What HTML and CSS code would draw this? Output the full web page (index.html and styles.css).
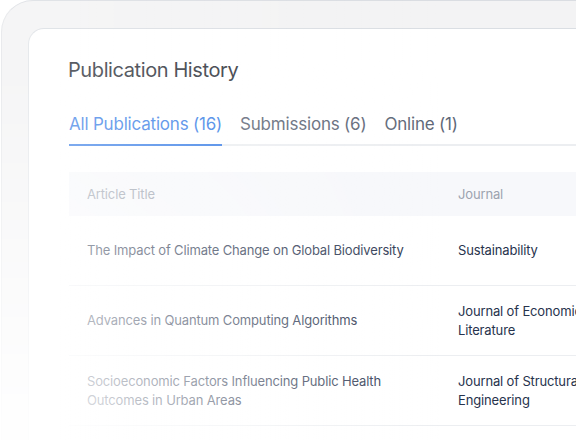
FILE: index.html
```html
<!DOCTYPE html>
<html>
<head>
    <title>Publication History</title>
    <link rel="stylesheet" href="styles.css">
</head>
<body>
    <div class="frame">
        <div class="card">
            <h1 class="card-title">Publication History</h1>

            <div class="tabs">
                <div class="tab active">All Publications (16)</div>
                <div class="tab">Submissions (6)</div>
                <div class="tab">Online (1)</div>
            </div>

            <div class="table">
                <div class="row head">
                    <div class="cell">Article Title</div>
                    <div class="cell">Journal</div>
                    <div class="cell">Status</div>
                </div>
                <div class="row">
                    <div class="cell article">The Impact of Climate Change on Global Biodiversity</div>
                    <div class="cell journal">Sustainability</div>
                    <div class="cell journal">Published</div>
                </div>
                <div class="row">
                    <div class="cell article">Advances in Quantum Computing Algorithms</div>
                    <div class="cell journal">Journal of Economic Literature</div>
                    <div class="cell journal">Under Review</div>
                </div>
                <div class="row">
                    <div class="cell article">Socioeconomic Factors Influencing Public Health Outcomes in Urban Areas</div>
                    <div class="cell journal">Journal of Structural Engineering</div>
                    <div class="cell journal">Published</div>
                </div>
            </div>
        </div>
    </div>

    <!-- white wash over the lower left corner -->
    <div class="fade"></div>
</body>
</html>
```

FILE: styles.css
```css
body {
    font-family: Inter, "Noto Sans", sans-serif;
    background-color: #fff;
    margin: 0;
    padding: 0;
    overflow: hidden;
    height: 440px;
}

.frame {
    width: 760px;
    height: 520px;
    margin-left: 1px;
    padding: 27px 0 0 26px;
    background-color: #f3f3f4;
    border-top: 1px solid #dadde2;
    border-left: 1px solid #e4e6e9;
    border-top-left-radius: 32px;
}

.card {
    height: 100%;
    padding: 29px 0 0 39px;
    background-color: #fff;
    border-top: 1px solid #dadee3;
    border-left: 1px solid #e1e4e8;
    border-top-left-radius: 16px;
}

.card-title {
    margin: 0;
    font-size: 20px;
    line-height: 24px;
    font-weight: 400;
    letter-spacing: -0.4px;
    color: #363a43;
}

.tabs {
    display: flex;
    gap: 18px;
    margin-top: 30px;
    margin-left: 1px;
    border-bottom: 2px solid #eceef1;
}

.tab {
    padding-bottom: 8px;
    margin-bottom: -2px;
    font-size: 17px;
    line-height: 24px;
    letter-spacing: -0.2px;
    color: #5f6878;
    border-bottom: 2px solid transparent;
}

.tab.active {
    color: #3b7fe6;
    border-bottom-color: #3b7fe6;
}

.table {
    margin-top: 26px;
    margin-left: 1px;
    font-size: 13px;
    line-height: 19px;
    letter-spacing: -0.15px;
}

.row {
    display: grid;
    grid-template-columns: 340px 150px 1fr;
    column-gap: 31px;
    align-items: center;
    min-height: 69px;
    padding-left: 18px;
    border-bottom: 1px solid #eceef1;
}

.row.head {
    min-height: 44px;
    background-color: #f7f8fb;
    border-bottom: none;
    color: #9ca3af;
}

.article {
    color: #2b3650;
}

.journal {
    color: #27334d;
}

.fade {
    position: absolute;
    left: 0;
    top: 0;
    width: 576px;
    height: 440px;
    background: linear-gradient(to right, rgba(255, 255, 255, 0.9) 60px, rgba(255, 255, 255, 0) 440px);
    -webkit-mask-image: linear-gradient(to bottom, rgba(0, 0, 0, 0.2) 60px, rgba(0, 0, 0, 1) 420px);
    mask-image: linear-gradient(to bottom, rgba(0, 0, 0, 0.2) 60px, rgba(0, 0, 0, 1) 420px);
    pointer-events: none;
}
```
